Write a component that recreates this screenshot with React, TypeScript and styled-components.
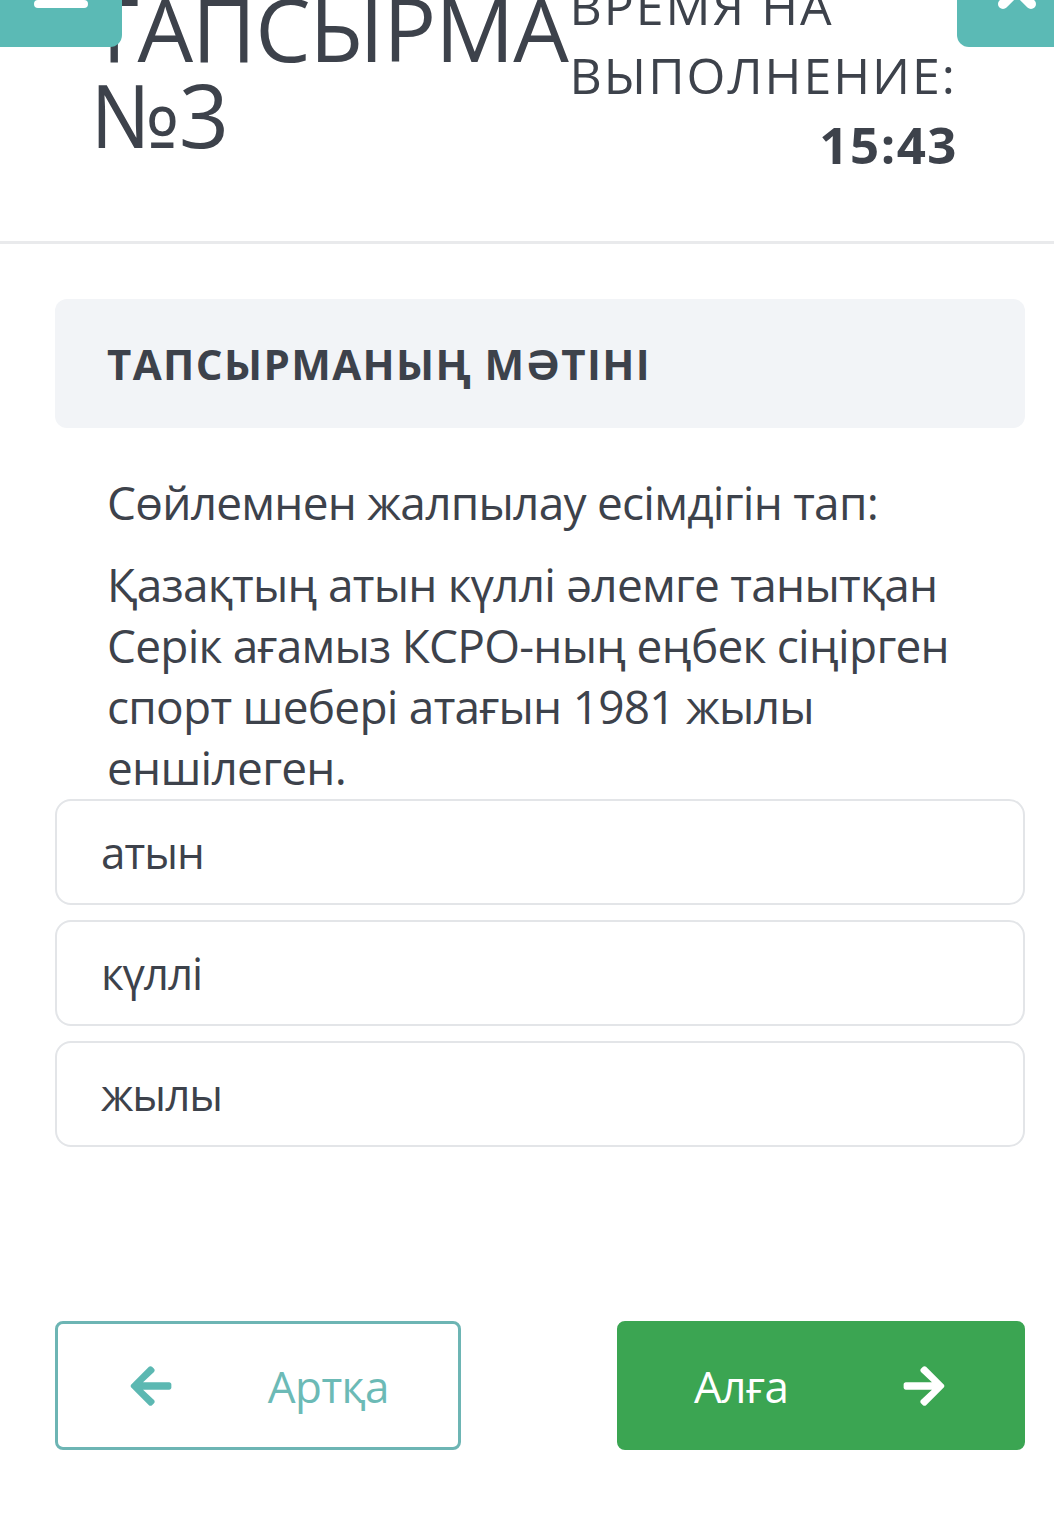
import React from "react";
import styled, { createGlobalStyle } from "styled-components";

const Global = createGlobalStyle`
  html, body { margin: 0; padding: 0; background: #ffffff; }
  body { font-family: "Open Sans", "Noto Sans", sans-serif; color: #3d424b; }
  * { box-sizing: border-box; }
`;

const Page = styled.div`
  position: relative;
  width: 100%;
  min-height: 1513px;
  overflow: hidden;
  background: #ffffff;
`;

const CornerButton = styled.div<{ $side: "left" | "right" }>`
  position: absolute;
  top: -53px;
  ${(p) => (p.$side === "left" ? "left: 0;" : "left: 957px;")}
  width: 122px;
  height: 100px;
  background: #5bbab5;
  border-radius: ${(p) => (p.$side === "left" ? "0 0 12px 0" : "0 0 0 12px")};
  z-index: 2;
`;

const IconSlot = styled.div<{ $top: number; $left: number }>`
  position: absolute;
  top: ${(p) => p.$top}px;
  left: ${(p) => p.$left}px;
  line-height: 0;
`;

const Header = styled.header`
  display: flex;
  justify-content: space-between;
  align-items: flex-start;
  margin-top: -28px;
  padding: 0 97px 62px 90px;
  border-bottom: 3px solid #e9eaec;
`;

const Title = styled.h1`
  margin: 13px 0 0;
  font-size: 88px;
  line-height: 86px;
  font-weight: 400;
  color: #3d424b;
  letter-spacing: -1px;
`;

const Timer = styled.div`
  font-size: 50px;
  line-height: 69px;
  font-weight: 400;
  color: #3d424b;
  letter-spacing: 2px;
`;

const TimerValue = styled.div`
  text-align: right;
  font-size: 51px;
  font-weight: 700;
  letter-spacing: 1.5px;
  margin-right: -1px;
`;

const Main = styled.main`
  padding: 55px 29px 0 55px;
`;

const SectionCard = styled.div`
  height: 129px;
  background: #f2f4f7;
  border-radius: 12px;
  display: flex;
  align-items: center;
  padding: 0 52px;
`;

const SectionTitle = styled.h2`
  margin: 0;
  font-size: 42px;
  font-weight: 700;
  color: #3d424b;
  letter-spacing: 1.4px;
`;

const QuestionText = styled.div`
  padding: 44px 40px 0 52px;
  font-size: 46px;
  line-height: 61px;
  color: #3d424b;
  letter-spacing: -0.75px;
`;

const Para = styled.p<{ $gap?: number }>`
  margin: ${(p) => p.$gap ?? 0}px 0 0;
`;

const Options = styled.div`
  display: flex;
  flex-direction: column;
  gap: 15px;
  margin-top: 1px;
`;

const Option = styled.div`
  height: 106px;
  border: 2px solid #e3e5e8;
  border-radius: 16px;
  display: flex;
  align-items: center;
  padding: 0 44px;
  font-size: 44px;
  letter-spacing: -1px;
  color: #3d424b;
  background: #fff;
`;

const NavRow = styled.div`
  display: flex;
  justify-content: space-between;
  margin-top: 174px;
`;

const NavButton = styled.button<{ $primary?: boolean }>`
  width: ${(p) => (p.$primary ? 408 : 406)}px;
  height: 129px;
  border-radius: 8px;
  border: 3px solid ${(p) => (p.$primary ? "#3ba552" : "#6db5b4")};
  background: ${(p) => (p.$primary ? "#3ba552" : "#ffffff")};
  color: ${(p) => (p.$primary ? "#ffffff" : "#6cbab6")};
  font-family: "Open Sans", "Noto Sans", sans-serif;
  font-size: 44px;
  letter-spacing: -0.5px;
  display: flex;
  align-items: center;
  justify-content: space-between;
  padding: ${(p) => (p.$primary ? "0 77px 0 74px" : "0 69px 0 72px")};
  cursor: pointer;
`;

const Arrow = ({ dir, color }: { dir: "left" | "right"; color: string }) => (
  <svg width="42" height="40" viewBox="0 36 448 440" aria-hidden="true">
    <path
      fill={color}
      transform={dir === "right" ? "translate(448 0) scale(-1 1)" : undefined}
      d="M257.5 445.1l-22.2 22.2c-9.4 9.4-24.6 9.4-33.9 0L7 273c-9.4-9.4-9.4-24.6 0-33.9L201.4 44.7c9.4-9.4 24.6-9.4 33.9 0l22.2 22.2c9.5 9.5 9.3 25-.4 34.3L136.6 216H424c13.3 0 24 10.7 24 24v32c0 13.3-10.7 24-24 24H136.6l120.5 114.8c9.8 9.3 10 24.8.4 34.3z"
    />
  </svg>
);

const Hamburger = () => (
  <svg width="54" height="42" viewBox="0 0 54 42" aria-hidden="true">
    <rect x="0" y="0" width="54" height="8" rx="4" fill="#fff" />
    <rect x="0" y="17" width="54" height="8" rx="4" fill="#fff" />
    <rect x="0" y="34" width="54" height="8" rx="4" fill="#fff" />
  </svg>
);

const CloseIcon = () => (
  <svg width="48" height="48" viewBox="0 0 48 48" aria-hidden="true">
    <path d="M10 10 L38 38 M38 10 L10 38" stroke="#fff" strokeWidth="10" strokeLinecap="round" />
  </svg>
);

export default function App() {
  const options = ["атын", "күллі", "жылы"];
  return (
    <Page>
      <Global />
      <CornerButton $side="left">
        <IconSlot $top={19} $left={34}>
          <Hamburger />
        </IconSlot>
      </CornerButton>
      <CornerButton $side="right">
        <IconSlot $top={19} $left={36}>
          <CloseIcon />
        </IconSlot>
      </CornerButton>
      <Header>
        <Title>
          ТАПСЫРМА
          <br />
          №3
        </Title>
        <Timer>
          ВРЕМЯ НА
          <br />
          ВЫПОЛНЕНИЕ:
          <TimerValue>15:43</TimerValue>
        </Timer>
      </Header>
      <Main>
        <SectionCard>
          <SectionTitle>ТАПСЫРМАНЫҢ МӘТІНІ</SectionTitle>
        </SectionCard>
        <QuestionText>
          <Para>Сөйлемнен жалпылау есімдігін тап:</Para>
          <Para $gap={21}>
            Қазақтың атын күллі әлемге танытқан Серік ағамыз КСРО-ның еңбек сіңірген спорт шебері атағын 1981 жылы
            еншілеген.
          </Para>
        </QuestionText>
        <Options>
          {options.map((o) => (
            <Option key={o}>{o}</Option>
          ))}
        </Options>
        <NavRow>
          <NavButton>
            <Arrow dir="left" color="#5cb8b2" />
            <span>Артқа</span>
          </NavButton>
          <NavButton $primary>
            <span>Алға</span>
            <Arrow dir="right" color="#ffffff" />
          </NavButton>
        </NavRow>
      </Main>
    </Page>
  );
}
